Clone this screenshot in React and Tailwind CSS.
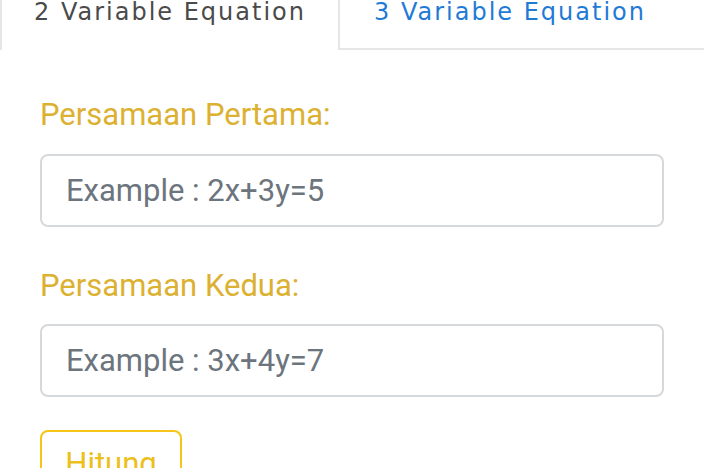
export default function App() {
  return (
    <div className="w-[704px] h-[468px] overflow-hidden bg-white">
      <div className="flex h-[50px]">
        <div className="w-[340px] h-[50px] border-l-2 border-r-2 border-[#e6e6e6] flex items-start">
          <span className="pl-[32px] text-[24px] leading-[24px] text-[#4a4a4a] font-['DejaVu_Sans',sans-serif] tracking-[2px]">
            2 Variable Equation
          </span>
        </div>
        <div className="flex-1 h-[50px] border-b-2 border-[#e6e6e6] flex items-start">
          <span className="pl-[34px] text-[24px] leading-[24px] text-[#1f7ad6] font-['DejaVu_Sans',sans-serif] tracking-[2px]">
            3 Variable Equation
          </span>
        </div>
      </div>

      <div className="px-[40px] font-['Roboto',sans-serif]">
        <label className="block mt-[42px] text-[31px] leading-[45px] text-[#dcb131]">
          Persamaan Pertama:
        </label>
        <input
          type="text"
          placeholder="Example : 2x+3y=5"
          className="mt-[17px] block w-[624px] h-[73px] rounded-[8px] border-2 border-[#d6d9dc] px-[24px] text-[31px] text-[#495057] placeholder:text-[#6c757d] outline-none"
        />

        <label className="block mt-[36px] text-[31px] leading-[45px] text-[#dcb131]">
          Persamaan Kedua:
        </label>
        <input
          type="text"
          placeholder="Example : 3x+4y=7"
          className="mt-[16px] block w-[624px] h-[73px] rounded-[8px] border-2 border-[#d6d9dc] px-[24px] text-[31px] text-[#495057] placeholder:text-[#6c757d] outline-none"
        />

        <button className="mt-[33px] w-[142px] h-[70px] rounded-[8px] border-2 border-[#f5c518] text-[#ecc01c] text-[31px] leading-none flex items-start justify-center">
          <span className="mt-[16px]">Hitung</span>
        </button>
      </div>
    </div>
  );
}
